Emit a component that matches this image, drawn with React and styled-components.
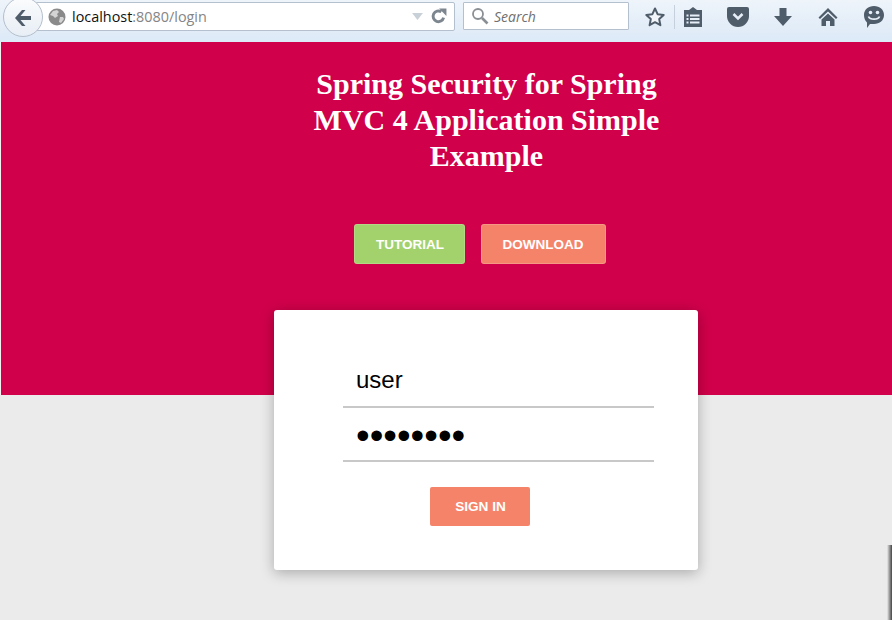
import React from 'react';
import styled, { createGlobalStyle } from 'styled-components';

const Global = createGlobalStyle`
  html, body { margin: 0; padding: 0; background: #ebebeb; }
  body { font-family: "Liberation Sans", Arial, sans-serif; overflow: hidden; }
`;

const Page = styled.div`
  position: relative;
  width: 892px;
  height: 620px;
  overflow: hidden;
  background: #ebebeb;
`;

const Toolbar = styled.div`
  height: 42px;
  box-sizing: border-box;
  display: flex;
  align-items: flex-start;
  padding-top: 2px;
  background: linear-gradient(#eef4fa, #dce9f7);
`;

const BackCircle = styled.div`
  position: absolute;
  left: 3px;
  top: -3px;
  width: 40px;
  height: 40px;
  box-sizing: border-box;
  border-radius: 50%;
  border: 1px solid #b4bfcc;
  background: linear-gradient(#fbfcfd, #e8eef5);
  display: flex;
  align-items: center;
  justify-content: center;
  padding-top: 2px;
`;

const UrlBar = styled.div`
  margin-left: 36px;
  width: 419px;
  height: 29px;
  box-sizing: border-box;
  background: #fff;
  border: 1px solid #b5c0cf;
  border-radius: 0 2px 2px 0;
  display: flex;
  align-items: center;
  padding: 0 7px 0 11px;
  font-family: "Open Sans", sans-serif;
  font-size: 14.4px;
  color: #858585;
`;

const Host = styled.span`
  color: #111;
  margin-left: 6px;
`;

const UrlEnd = styled.div`
  margin-left: auto;
  display: flex;
  align-items: center;
  gap: 6px;
`;

const SearchBar = styled.div`
  margin-left: 8px;
  width: 166px;
  height: 28px;
  box-sizing: border-box;
  background: #fff;
  border: 1px solid #b5c0cf;
  border-radius: 1px;
  display: flex;
  align-items: center;
  gap: 5px;
  padding-left: 7px;
  font-family: "Open Sans", sans-serif;
  font-style: italic;
  font-size: 14px;
  color: #6f6f6f;
`;

const ToolIcons = styled.div`
  margin-left: 15px;
  flex: 1;
  display: flex;
  align-items: center;
  height: 30px;
`;

const ToolIcon = styled.svg`
  flex: none;
  margin-left: ${(p) => p.$gap}px;
`;

const Divider = styled.div`
  width: 1px;
  height: 24px;
  margin-left: 8px;
  background: #c5d0dc;
`;

const Hero = styled.section`
  height: 353px;
  box-sizing: border-box;
  background: #d0004a;
  border-left: 1px solid #f2f2f2;
  padding-top: 24px;
  display: flex;
  flex-direction: column;
  align-items: center;
`;

const Title = styled.h1`
  width: 380px;
  margin: 0 0 0 80px;
  font-family: "Liberation Serif", "Times New Roman", serif;
  font-weight: bold;
  font-size: 30px;
  line-height: 36px;
  color: #fff;
  text-align: center;
`;

const HeroActions = styled.div`
  margin: 50px 0 0 66px;
  display: flex;
  gap: 16px;
`;

const Action = styled.button`
  height: 40px;
  width: ${(p) => p.$width}px;
  padding: 0 0 0 ${(p) => p.$shift || 0}px;
  border: 1px solid rgba(255, 255, 255, 0.18);
  border-radius: 3px;
  background: ${(p) => p.$bg};
  color: #fff;
  font-family: "Liberation Sans", Arial, sans-serif;
  font-weight: bold;
  font-size: 13.5px;
`;

const Card = styled.form`
  position: relative;
  width: 424px;
  height: 260px;
  box-sizing: border-box;
  margin: -85px 0 0 274px;
  padding: 44px 44px 0 69px;
  background: #fff;
  border-radius: 3px;
  box-shadow: 0 3px 14px rgba(0, 0, 0, 0.28);
  display: flex;
  flex-direction: column;
`;

const Field = styled.input`
  display: block;
  width: 100%;
  height: 54px;
  box-sizing: border-box;
  padding: ${(p) => p.$top || 0}px 0 0 13px;
  border: 0;
  border-bottom: 2px solid #c8c8c8;
  outline: none;
  background: transparent;
  color: #000;
  font-family: "Liberation Sans", Arial, sans-serif;
  font-size: ${(p) => p.$size}px;
`;

const SignIn = styled.button`
  align-self: flex-start;
  margin: 25px 0 0 87px;
  width: 100px;
  height: 39px;
  padding: 0 0 0 1px;
  border: 0;
  border-radius: 2px;
  background: #f5836a;
  color: #fff;
  font-family: "Liberation Sans", Arial, sans-serif;
  font-weight: bold;
  font-size: 13.6px;
`;

const EdgeShadow = styled.div`
  position: absolute;
  right: 0;
  top: 545px;
  width: 5px;
  height: 75px;
  background: linear-gradient(90deg, rgba(60, 60, 60, 0), rgba(50, 50, 50, 0.9));
`;

const iconFill = '#4f5d6b';

export default function App() {
  return (
    <Page>
      <Global />
      <Toolbar>
        <UrlBar>
          <svg width="18" height="18" viewBox="0 0 18 18">
            <circle cx="9" cy="9" r="8.5" fill="#8a8a8a" />
            <path d="M5 3l4-1 2 2-2 2 1 2-3 2-2-2-3-1zM12 9l3 0 1 2-3 4-2-1z" fill="#d4d4d4" />
          </svg>
          <Host>localhost</Host>:8080/login
          <UrlEnd>
            <svg width="13" height="9" viewBox="0 0 14 10">
              <path d="M1 1h12L7 9z" fill="#c8d0d8" />
            </svg>
            <svg width="17" height="17" viewBox="0 0 15 15">
              <path d="M12 8.500A4.700 4.700 0 1 1 10 3.400" fill="none" stroke="#7d868f" strokeWidth="2.600" />
              <path d="M8 0.500h6.500V7z" fill="#7d868f" />
            </svg>
          </UrlEnd>
        </UrlBar>
        <SearchBar>
          <svg width="18" height="18" viewBox="0 0 18 18">
            <circle cx="7" cy="7" r="5" fill="none" stroke="#8a8f94" strokeWidth="1.800" />
            <path d="M11 11l5.500 5.500" stroke="#8a8f94" strokeWidth="2.600" />
          </svg>
          Search
        </SearchBar>
        <ToolIcons>
          <ToolIcon $gap={0} width="22" height="22" viewBox="0 0 22 22">
            <path d="M11 2.500l2.600 5.700 6.100.7-4.500 4.200 1.200 6.100L11 16.200l-5.400 3 1.200-6.100-4.500-4.200 6.100-.7z" fill="#f2f6fa" stroke={iconFill} strokeWidth="2" strokeLinejoin="round" />
          </ToolIcon>
          <Divider />
          <ToolIcon $gap={8} width="20" height="22" viewBox="0 0 20 22">
            <path d="M1 4h5l4-3 4 3h5v17H1z" fill={iconFill} />
            <path d="M3.500 8.500h2v2h-2zM7 8.500h9.500v2H7zM3.500 12h2v2h-2zM7 12h9.500v2H7zM3.500 15.500h2v2h-2zM7 15.500h9.500v2H7z" fill="#e6eef7" />
          </ToolIcon>
          <ToolIcon $gap={24} width="22" height="20" viewBox="0 0 22 20">
            <path d="M2 0h18a2 2 0 0 1 2 2v7a11 11 0 0 1-22 0V2a2 2 0 0 1 2-2z" fill={iconFill} />
            <path d="M6.500 7l4.500 4.500L15.500 7" fill="none" stroke="#e6eef7" strokeWidth="2.600" />
          </ToolIcon>
          <ToolIcon $gap={24} width="20" height="20" viewBox="0 0 20 20">
            <path d="M6.500 1h7v8H19l-9 10-9-10h5.500z" fill={iconFill} />
          </ToolIcon>
          <ToolIcon $gap={25} width="20" height="20" viewBox="0 0 20 20">
            <path d="M10 1L0.500 10.500 2 12l8-7.500L18 12l1.500-1.500z" fill={iconFill} />
            <path d="M10 6.500l6.500 6V19H12v-5H8v5H3.500v-6.500z" fill={iconFill} />
          </ToolIcon>
          <ToolIcon $gap={25} width="22" height="24" viewBox="0 0 22 24">
            <path d="M11 1c5.800 0 10 3.800 10 9s-4.200 9-10 9H7l-3 4v-5.500C2 15.700 1 13 1 10c0-5.200 4.200-9 10-9z" fill={iconFill} />
            <circle cx="7.500" cy="7.500" r="1.800" fill="#e6eef7" />
            <circle cx="14.500" cy="7.500" r="1.800" fill="#e6eef7" />
            <path d="M5.500 11.500c1.500 3.500 9.500 3.500 11 0" fill="none" stroke="#e6eef7" strokeWidth="1.800" />
          </ToolIcon>
        </ToolIcons>
        <BackCircle>
          <svg width="20" height="18" viewBox="0 0 20 18">
            <path d="M9 1L2 9l7 8h3.500L7.500 11H18V7H7.500l5-6z" fill={iconFill} />
          </svg>
        </BackCircle>
      </Toolbar>
      <Hero>
        <Title>Spring Security for Spring MVC 4 Application Simple Example</Title>
        <HeroActions>
          <Action type="button" $width={111} $shift={2} $bg="#a3d16c">TUTORIAL</Action>
          <Action type="button" $width={125} $bg="#f5836a">DOWNLOAD</Action>
        </HeroActions>
      </Hero>
      <Card onSubmit={(e) => e.preventDefault()}>
        <Field type="text" $size={24} defaultValue="user" readOnly />
        <Field type="password" $size={39} $top={4} defaultValue="password" readOnly />
        <SignIn type="button">SIGN IN</SignIn>
      </Card>
      <EdgeShadow />
    </Page>
  );
}
